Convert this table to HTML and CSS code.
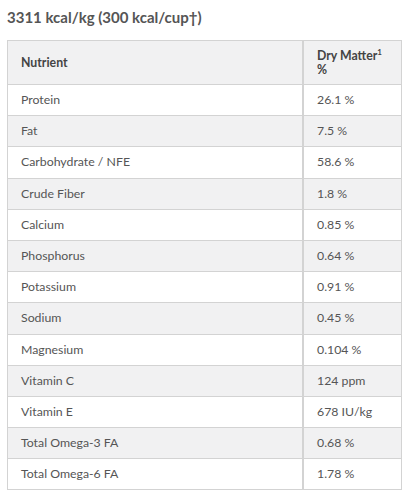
FILE: index.html
```html
<!DOCTYPE html>
<html lang="en">
<head>
    <meta charset="UTF-8">
    <meta name="viewport" content="width=device-width, initial-scale=1.0">
    <title>Caloric Content</title>
    <link rel="stylesheet" href="styles.css">
</head>
<body>
    <div class="wrap">
        <h3 class="kcal">3311 kcal/kg (300 kcal/cup†)</h3>
        <table class="nutrients">
            <thead>
                <tr>
                    <th>Nutrient</th>
                    <th><span class="dm">Dry Matter<sup>1</sup></span><span class="dm">%</span></th>
                </tr>
            </thead>
            <tbody>
                <tr><td>Protein</td><td>26.1 %</td></tr>
                <tr><td>Fat</td><td>7.5 %</td></tr>
                <tr><td>Carbohydrate / NFE</td><td>58.6 %</td></tr>
                <tr><td>Crude Fiber</td><td>1.8 %</td></tr>
                <tr><td>Calcium</td><td>0.85 %</td></tr>
                <tr><td>Phosphorus</td><td>0.64 %</td></tr>
                <tr><td>Potassium</td><td>0.91 %</td></tr>
                <tr><td>Sodium</td><td>0.45 %</td></tr>
                <tr><td>Magnesium</td><td>0.104 %</td></tr>
                <tr><td>Vitamin C</td><td>124 ppm</td></tr>
                <tr><td>Vitamin E</td><td>678 IU/kg</td></tr>
                <tr><td>Total Omega-3 FA</td><td>0.68 %</td></tr>
                <tr><td>Total Omega-6 FA</td><td>1.78 %</td></tr>
            </tbody>
        </table>
    </div>
</body>
</html>
```

FILE: styles.css
```css
body {
    font-family: Lato, "Open Sans", sans-serif;
    margin: 0;
    padding: 0;
    background: #fff;
    color: #555;
}

.wrap {
    padding: 6px 1px 0 7px;
}

.kcal {
    margin: 0 0 12px;
    font-size: 15px;
    font-weight: 700;
    line-height: 22px;
    color: #555;
}

.nutrients {
    width: 395px;
    border-collapse: collapse;
    border: 1px solid #d3d3d3;
    font-size: 12.3px;
}

.nutrients th,
.nutrients td {
    text-align: left;
    padding: 0 13px;
    border-top: 1px solid #d3d3d3;
    border-bottom: 1px solid #d3d3d3;
}

.nutrients th:first-child,
.nutrients td:first-child {
    width: 268px;
    border-right: 2px solid #d3d3d3;
}

.nutrients th {
    height: 43px;
    background: #f1f1f2;
    color: #444;
    font-weight: 700;
    line-height: 14px;
}

.dm {
    display: block;
}

.nutrients sup {
    font-size: 8px;
    line-height: 0;
    vertical-align: 5px;
}

.nutrients td {
    height: 30.2px;
    line-height: 16px;
}

.nutrients tbody tr:nth-child(even) {
    background: #f1f1f2;
}
```
